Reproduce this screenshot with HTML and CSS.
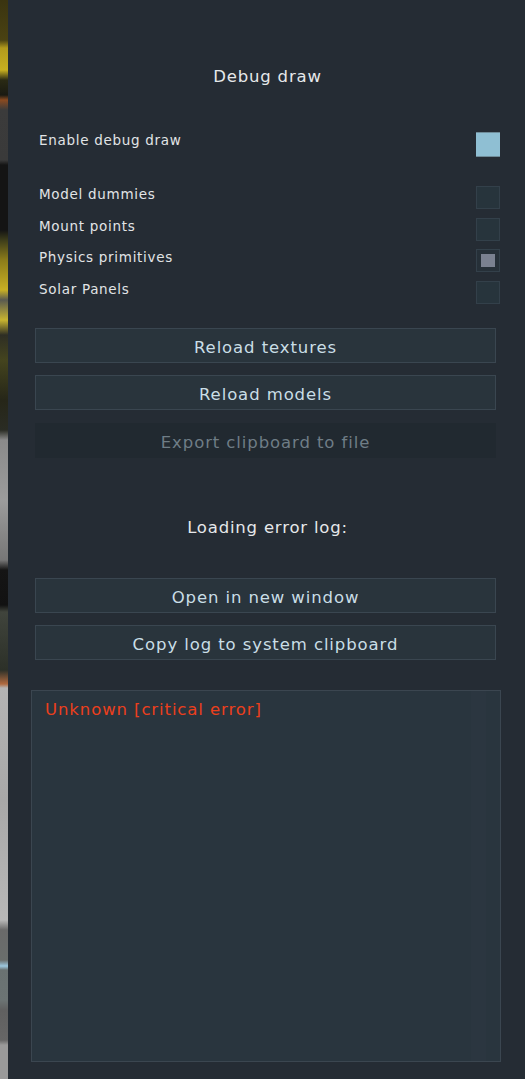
FILE: index.html
```html
<!DOCTYPE html>
<html>
<head>
<meta charset="utf-8">
<link rel="stylesheet" href="styles.css">
</head>
<body>
<div class="screen">
  <div class="backdrop"></div>
  <div class="panel">
    <div class="title">Debug draw</div>
    <div class="row row-main">
      <span class="label">Enable debug draw</span>
      <span class="check check-on"></span>
    </div>
    <div class="options">
      <div class="row">
        <span class="label">Model dummies</span>
        <span class="check"></span>
      </div>
      <div class="row">
        <span class="label">Mount points</span>
        <span class="check"></span>
      </div>
      <div class="row">
        <span class="label">Physics primitives</span>
        <span class="check check-part"><span class="dot"></span></span>
      </div>
      <div class="row">
        <span class="label">Solar Panels</span>
        <span class="check"></span>
      </div>
    </div>
    <div class="buttons">
      <div class="btn">Reload textures</div>
      <div class="btn">Reload models</div>
      <div class="btn btn-disabled">Export clipboard to file</div>
    </div>
    <div class="subtitle">Loading error log:</div>
    <div class="buttons buttons-log">
      <div class="btn">Open in new window</div>
      <div class="btn">Copy log to system clipboard</div>
    </div>
    <div class="log">
      <div class="log-text">Unknown [critical error]</div>
      <div class="log-scroll"></div>
    </div>
  </div>
</div>
</body>
</html>
```

FILE: styles.css
```css
html, body {
  margin: 0;
  padding: 0;
  background: #252c34;
}
.screen {
  display: flex;
  width: 525px;
  height: 1079px;
  overflow: hidden;
  font-family: "DejaVu Sans", "Liberation Sans", sans-serif;
}
.backdrop {
  width: 8px;
  flex: 0 0 8px;
  background: linear-gradient(to bottom,
    #3a3410 0px, #4a4212 40px, #b29a1c 48px, #c8b020 70px, #2a2a14 80px,
    #1a1a12 95px, #8a4a20 100px, #3b3b3b 110px, #3a3a3a 160px,
    #141414 165px, #141414 230px, #3c3c1a 240px, #8c7c1a 260px, #c8b024 290px,
    #5a5a50 300px, #c8b430 320px, #2e2e24 335px, #44441e 360px, #262618 400px,
    #2a2c24 430px, #8a8a8a 440px, #9c9c9c 500px, #777 560px, #151515 570px,
    #121212 605px, #40443c 612px, #2c3028 670px, #b06a40 684px, #b4b4b4 688px,
    #a8a8a8 800px, #b8b8b8 920px, #6a6a6a 930px, #6a6e6c 960px, #9cc8e0 966px,
    #6a7272 970px, #6c7474 1000px, #606060 1010px, #666 1040px, #9a9a9a 1045px, #9a9a9a 1079px);
}
.panel {
  flex: 1;
  background: #252c34;
  display: flex;
  flex-direction: column;
  padding: 0 29px 0 27px;
}
.title {
  margin-top: 65px;
  height: 24px;
  line-height: 24px;
  text-align: center;
  color: #e6e8ea;
  font-size: 16.5px;
  letter-spacing: 0.8px;
  padding-left: 4px;
}
.row {
  display: flex;
  justify-content: space-between;
  align-items: flex-start;
  margin: 0 -4px 0 4px;
  height: 23px;
}
.row-main {
  margin-top: 43px;
  height: 25px;
}
.label {
  color: #e1e4e6;
  font-size: 13.5px;
  letter-spacing: 0.7px;
  line-height: 14px;
  padding-top: 1px;
}
.options {
  display: flex;
  flex-direction: column;
  gap: 8.7px;
  margin-top: 29px;
}
.check {
  width: 22px;
  height: 21px;
  background: #27343c;
  border: 1px solid #33404a;
  display: flex;
  align-items: center;
  justify-content: center;
}
.row-main .check {
  height: 23px;
  background: #8fbfd3;
  border-color: #6f8c99;
  border-width: 1px 0 1px 0;
  width: 24px;
}
.check-part {
  background: #263038;
}
.dot {
  width: 14px;
  height: 13px;
  background: #7a8190;
}
.buttons {
  display: flex;
  flex-direction: column;
  gap: 12px;
  margin-top: 24px;
}
.btn {
  height: 30px;
  padding-top: 3px;
  line-height: 31px;
  text-align: center;
  background: #29343c;
  border: 1px solid #3a4650;
  color: #c9dee6;
  font-size: 16.5px;
  letter-spacing: 0.9px;
}
.btn-disabled {
  background: #212930;
  border-color: #212930;
  color: #6f7d86;
  margin-top: 1px;
}
.subtitle {
  margin-top: 58px;
  height: 24px;
  line-height: 24px;
  text-align: center;
  color: #e6e8ea;
  font-size: 16.5px;
  letter-spacing: 0.8px;
  padding-left: 4px;
}
.buttons-log {
  margin-top: 38px;
}
.log {
  margin: 30px -5px 0 -4px;
  height: 370px;
  background: #29353e;
  border: 1px solid #3b4650;
  position: relative;
}
.log-text {
  color: #ec3f1c;
  font-size: 16.5px;
  letter-spacing: 0.9px;
  padding: 9px 0 0 13px;
  line-height: 20px;
}
.log-scroll {
  position: absolute;
  top: 0;
  bottom: 0;
  right: 14px;
  width: 15px;
  background: #2b3640;
}
```
